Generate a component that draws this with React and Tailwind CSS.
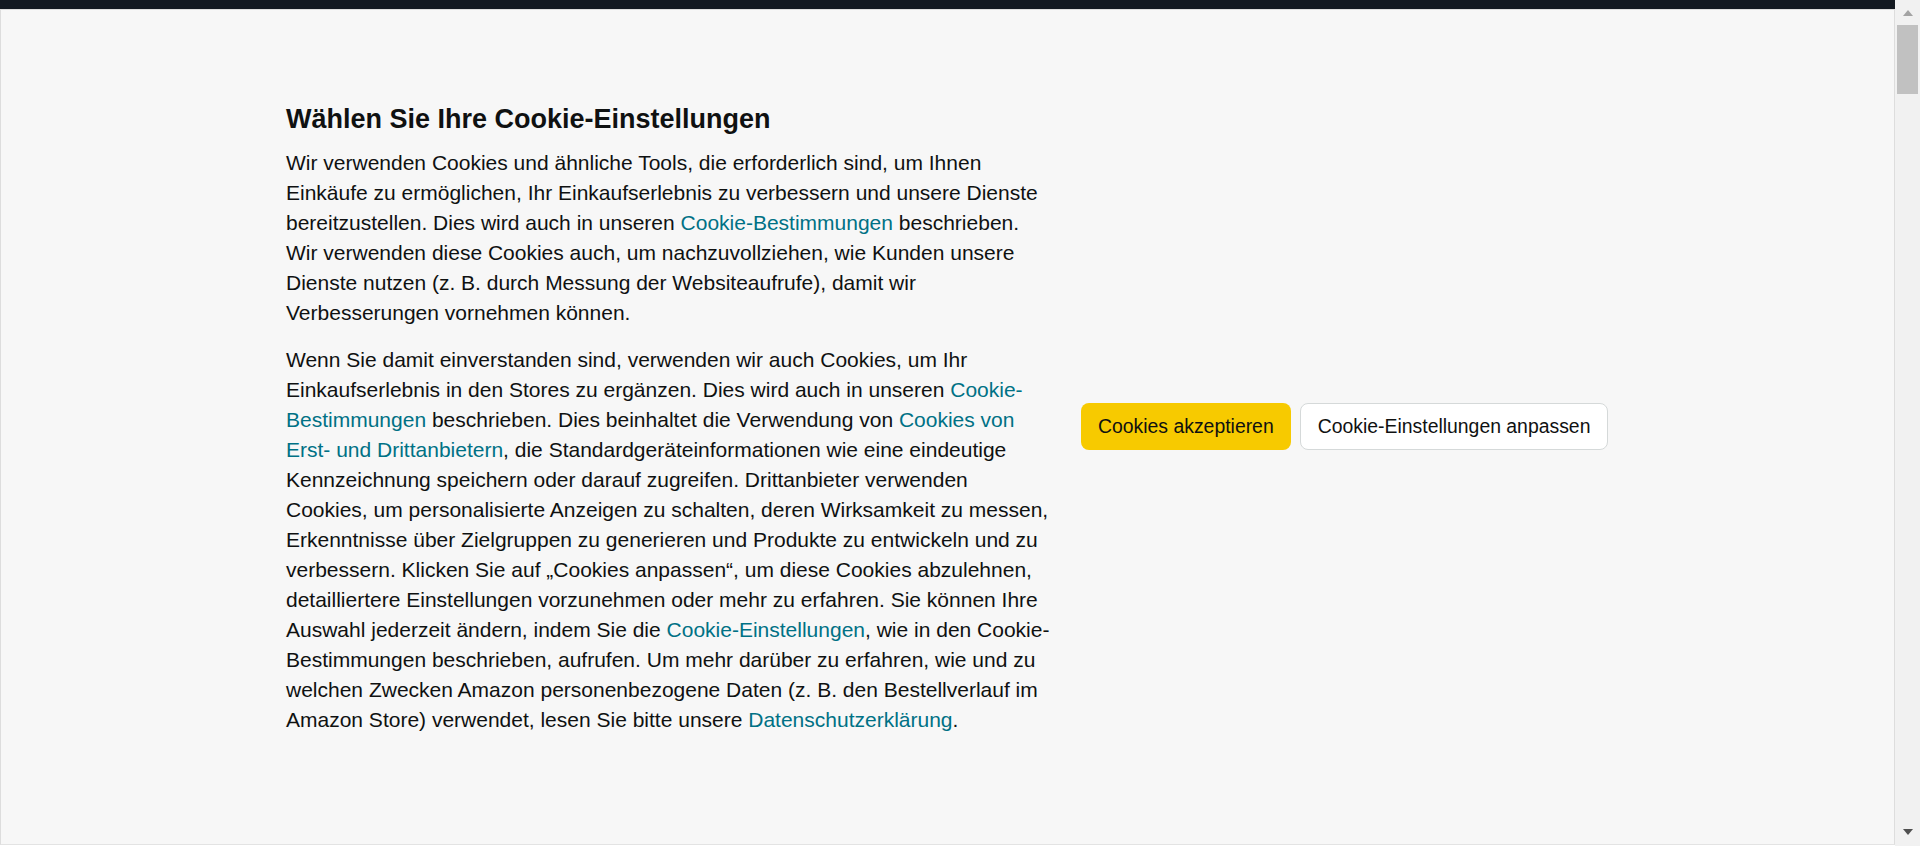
const Link = ({ children }) => (
  <a href="#" className="text-[#007185] hover:text-[#c7511f] hover:underline">
    {children}
  </a>
);

const FakeScrollbar = () => (
  <div className="w-[25px] h-full bg-[#f1f1f1] flex flex-col items-center">
    <div className="h-[25px] w-full flex items-center justify-center">
      <svg width="10" height="6" viewBox="0 0 10 6">
        <polygon points="5,0 10,6 0,6" fill="#a3a3a3" />
      </svg>
    </div>
    <div className="w-[21px] h-[69px] bg-[#c1c1c1]" />
    <div className="flex-1" />
    <div className="h-[25px] w-full flex items-start justify-center pt-[8px]">
      <svg width="10" height="6" viewBox="0 0 10 6">
        <polygon points="0,0 10,0 5,6" fill="#505050" />
      </svg>
    </div>
  </div>
);

export default function App() {
  return (
    <div
      className="w-[1920px] h-[846px] flex overflow-hidden text-[#0f1111]"
      style={{ fontFamily: '"Liberation Sans", Arial, sans-serif' }}
    >
      <div className="w-[1895px] h-full flex flex-col">
        <div className="h-[9px] bg-[#131921]" />
        <div className="flex-1 border border-[#dddddd] border-b-[#e3e3e3] bg-[#f7f7f7] mb-[1px]">
          <div className="flex items-center pt-[91px] pl-[285px]">
            <div className="w-[766px]">
              <h2 className="text-[27px] leading-[36px] font-bold mb-[11px]">
                Wählen Sie Ihre Cookie-Einstellungen
              </h2>
              <p className="text-[21px] leading-[30px] mb-[17px]">
                Wir verwenden Cookies und ähnliche Tools, die erforderlich sind, um Ihnen
                Einkäufe zu ermöglichen, Ihr Einkaufserlebnis zu verbessern und unsere Dienste
                bereitzustellen. Dies wird auch in unseren <Link>Cookie-Bestimmungen</Link>{" "}
                beschrieben. Wir verwenden diese Cookies auch, um nachzuvollziehen, wie Kunden
                unsere Dienste nutzen (z. B. durch Messung der Websiteaufrufe), damit wir
                Verbesserungen vornehmen können.
              </p>
              <p className="text-[21px] leading-[30px] mb-[17px]">
                Wenn Sie damit einverstanden sind, verwenden wir auch Cookies, um Ihr
                Einkaufserlebnis in den Stores zu ergänzen. Dies wird auch in unseren{" "}
                <Link>Cookie-Bestimmungen</Link> beschrieben. Dies beinhaltet die Verwendung von{" "}
                <Link>Cookies von Erst- und Drittanbietern</Link>, die Standardgeräteinformationen
                wie eine eindeutige Kennzeichnung speichern oder darauf zugreifen. Drittanbieter
                verwenden Cookies, um personalisierte Anzeigen zu schalten, deren Wirksamkeit zu
                messen, Erkenntnisse über Zielgruppen zu generieren und Produkte zu entwickeln und
                zu verbessern. Klicken Sie auf „Cookies anpassen“, um diese Cookies abzulehnen,
                detailliertere Einstellungen vorzunehmen oder mehr zu erfahren. Sie können Ihre
                Auswahl jederzeit ändern, indem Sie die <Link>Cookie-Einstellungen</Link>, wie in
                den Cookie-Bestimmungen beschrieben, aufrufen. Um mehr darüber zu erfahren, wie und
                zu welchen Zwecken Amazon personenbezogene Daten (z. B. den Bestellverlauf im
                Amazon Store) verwendet, lesen Sie bitte unsere{" "}
                <Link>Datenschutzerklärung</Link>.
              </p>
            </div>

            <div className="flex gap-[9px] ml-[29px]">
              <button
                type="button"
                className="h-[47px] px-[17px] rounded-[8px] bg-[#f7ca00] text-[19.4px] text-[#0f1111] hover:bg-[#f2bd00]"
              >
                Cookies akzeptieren
              </button>
              <button
                type="button"
                className="h-[47px] px-[17px] rounded-[8px] bg-white border border-[#d5d9d9] text-[19.4px] text-[#0f1111] hover:bg-[#f7fafa]"
              >
                Cookie-Einstellungen anpassen
              </button>
            </div>
          </div>
        </div>
      </div>
      <FakeScrollbar />
    </div>
  );
}
